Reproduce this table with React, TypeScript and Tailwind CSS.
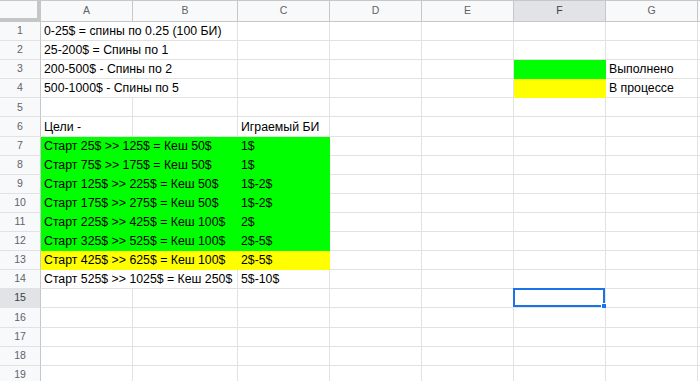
import React from 'react';

type CellDef = {
  text?: string;
  span?: boolean;
  fill?: 'green' | 'yellow';
  selected?: boolean;
};

const COLUMNS = ['A', 'B', 'C', 'D', 'E', 'F', 'G', ''];

const empty = (n: number): CellDef[] => Array.from({ length: n }, () => ({}));

// each row lists its cells from column A onward; a span cell covers A+B
const rows: CellDef[][] = [
  [{ text: '0-25$ = спины по 0.25 (100 БИ)', span: true }, ...empty(6)],
  [{ text: '25-200$ = Спины по 1', span: true }, ...empty(6)],
  [{ text: '200-500$ - Спины по 2', span: true }, {}, {}, {}, { fill: 'green' }, { text: 'Выполнено' }, {}],
  [{ text: '500-1000$ - Спины по 5', span: true }, {}, {}, {}, { fill: 'yellow' }, { text: 'В процессе' }, {}],
  empty(8),
  [{ text: 'Цели -' }, {}, { text: 'Играемый БИ' }, ...empty(5)],
  [{ text: 'Старт 25$ >> 125$ = Кеш 50$', span: true, fill: 'green' }, { text: '1$', fill: 'green' }, ...empty(5)],
  [{ text: 'Старт 75$ >> 175$ = Кеш 50$', span: true, fill: 'green' }, { text: '1$', fill: 'green' }, ...empty(5)],
  [{ text: 'Старт 125$ >> 225$ = Кеш 50$', span: true, fill: 'green' }, { text: '1$-2$', fill: 'green' }, ...empty(5)],
  [{ text: 'Старт 175$ >> 275$ = Кеш 50$', span: true, fill: 'green' }, { text: '1$-2$', fill: 'green' }, ...empty(5)],
  [{ text: 'Старт 225$ >> 425$ = Кеш 100$', span: true, fill: 'green' }, { text: '2$', fill: 'green' }, ...empty(5)],
  [{ text: 'Старт 325$ >> 525$ = Кеш 100$', span: true, fill: 'green' }, { text: '2$-5$', fill: 'green' }, ...empty(5)],
  [{ text: 'Старт 425$ >> 625$ = Кеш 100$', span: true, fill: 'yellow' }, { text: '2$-5$', fill: 'yellow' }, ...empty(5)],
  [{ text: 'Старт 525$ >> 1025$ = Кеш 250$', span: true }, { text: '5$-10$' }, ...empty(5)],
  [{}, {}, {}, {}, {}, { selected: true }, {}, {}],
  empty(8),
  empty(8),
  empty(8),
  empty(8),
];

function Cell({ cell }: { cell: CellDef }) {
  const fillClass =
    cell.fill === 'green'
      ? 'bg-[#00ff00] border-[#00ff00]'
      : cell.fill === 'yellow'
        ? 'bg-[#ffff00] border-[#ffff00]'
        : 'bg-white border-[#e2e2e2]';

  return (
    <div
      className={`relative flex items-end overflow-visible whitespace-nowrap border-r border-b pl-[3px] pb-[1px] text-[12.3px] leading-[16px] text-[#000] ${fillClass} ${
        cell.span ? 'col-span-2' : ''
      }`}
    >
      {cell.text}
      {cell.selected && (
        <div className="pointer-events-none absolute -left-px -top-px bottom-0 right-0 border-2 border-[#1a73e8]">
          <div className="absolute -bottom-[4px] -right-[4px] h-[6px] w-[6px] border border-white bg-[#1a73e8]" />
        </div>
      )}
    </div>
  );
}

export default function App() {
  return (
    <div className="h-[381px] w-[700px] overflow-hidden bg-white font-['Liberation_Sans',Arial,sans-serif]">
      <div className="grid grid-cols-[41px_92px_105px_92px_92px_92px_92px_92px_100px] grid-rows-[22px_repeat(19,19.1px)]">
        {/* corner */}
        <div className="border-t border-[#c7c7c7] bg-[#f8f9fa]">
          <div className="h-[21px] w-[41px] border-r-4 border-b-4 border-[#c4c7c5] bg-[#f8f9fa]" />
        </div>
        {COLUMNS.map((c) => (
          <div
            key={c || 'h'}
            className={`flex items-center justify-center border-t border-r border-b border-[#c7c7c7] text-[10.5px] ${
              c === 'F' ? 'bg-[#e1e3e6] text-[#3c4043]' : 'bg-[#f8f9fa] text-[#5f6368]'
            }`}
          >
            {c}
          </div>
        ))}

        {rows.map((row, i) => (
          <React.Fragment key={i}>
            <div
              className={`flex items-center justify-center border-r border-b border-r-[#c7c7c7] border-b-[#e2e2e2] text-[10.5px] ${
                i === 14 ? 'bg-[#e1e3e6] text-[#3c4043]' : 'bg-[#f8f9fa] text-[#5f6368]'
              }`}
            >
              {i + 1}
            </div>
            {row.map((cell, j) => (
              <Cell key={j} cell={cell} />
            ))}
          </React.Fragment>
        ))}
      </div>
    </div>
  );
}
